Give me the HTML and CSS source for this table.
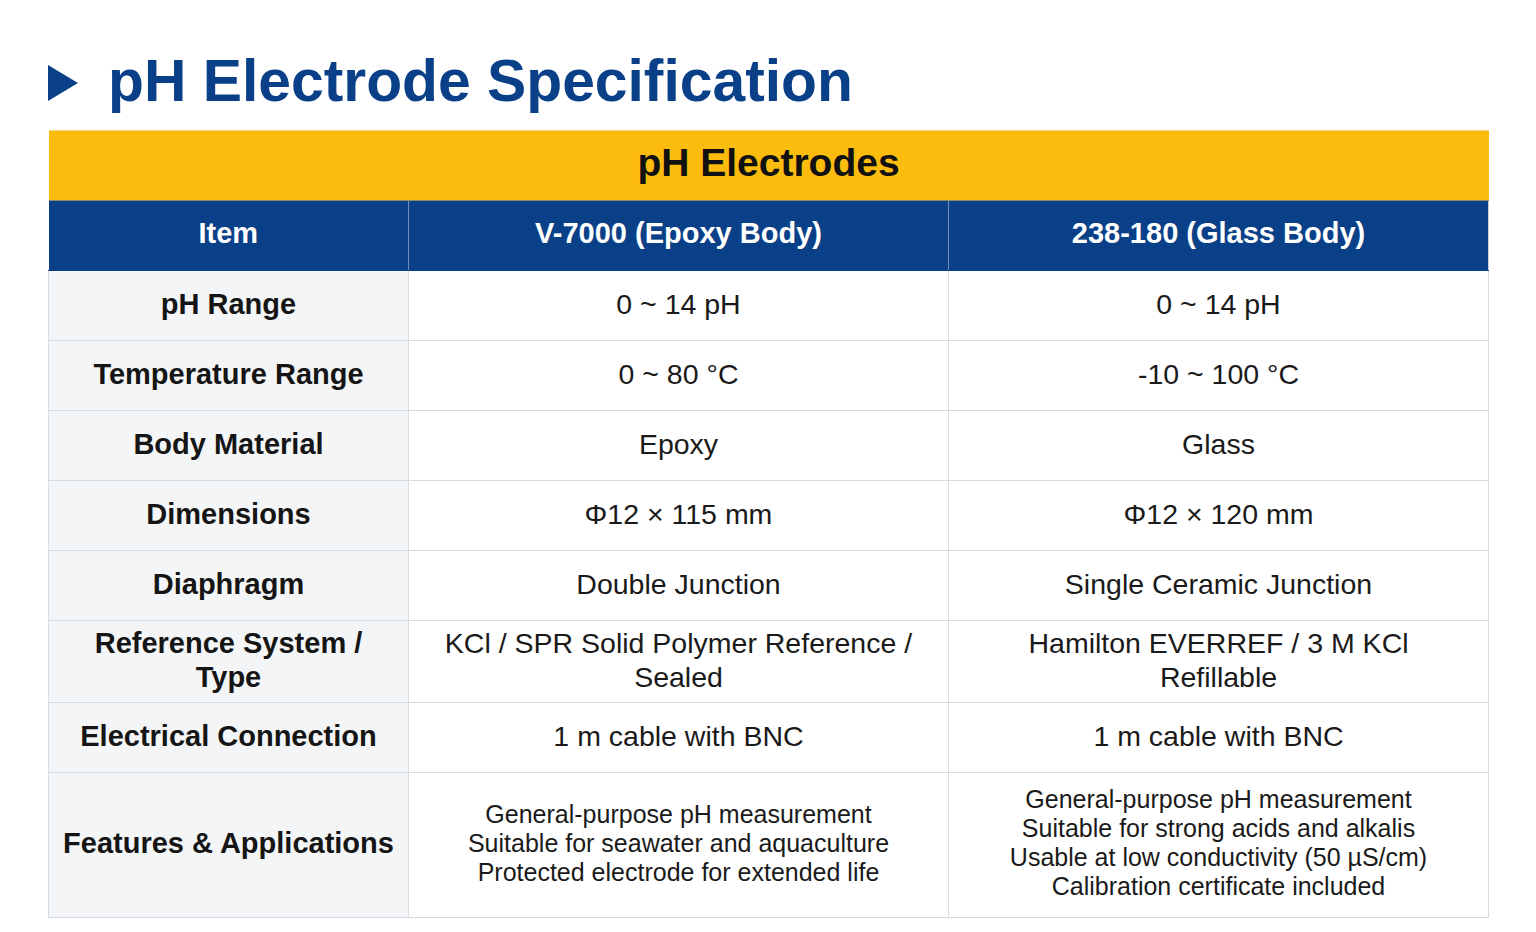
FILE: index.html
```html
<!DOCTYPE html>
<html lang="en">
<head>
<meta charset="utf-8">
<title>pH Electrode Specification</title>
<link rel="stylesheet" href="styles.css">
</head>
<body>
<main class="page">
  <h1 class="title">
    <svg class="marker" width="30" height="36" viewBox="0 0 30 36" aria-hidden="true"><polygon points="0,0 30,18 0,36" fill="#0a4088"/></svg>
    <span>pH Electrode Specification</span>
  </h1>
  <table class="spec">
    <colgroup>
      <col class="c-item">
      <col class="c-val">
      <col class="c-val">
    </colgroup>
    <thead>
      <tr class="band"><th colspan="3">pH Electrodes</th></tr>
      <tr class="head"><th>Item</th><th>V-7000 (Epoxy Body)</th><th>238-180 (Glass Body)</th></tr>
    </thead>
    <tbody>
      <tr class="row"><th>pH Range</th><td>0 ~ 14 pH</td><td>0 ~ 14 pH</td></tr>
      <tr class="row"><th>Temperature Range</th><td>0 ~ 80 °C</td><td>-10 ~ 100 °C</td></tr>
      <tr class="row"><th>Body Material</th><td>Epoxy</td><td>Glass</td></tr>
      <tr class="row"><th>Dimensions</th><td>Φ12 × 115 mm</td><td>Φ12 × 120 mm</td></tr>
      <tr class="row"><th>Diaphragm</th><td>Double Junction</td><td>Single Ceramic Junction</td></tr>
      <tr class="row tall"><th>Reference System /<br>Type</th><td>KCl / SPR Solid Polymer Reference /<br>Sealed</td><td>Hamilton EVERREF / 3 M KCl<br>Refillable</td></tr>
      <tr class="row"><th>Electrical Connection</th><td>1 m cable with BNC</td><td>1 m cable with BNC</td></tr>
      <tr class="row feat"><th>Features &amp; Applications</th><td class="small">General-purpose pH measurement<br>Suitable for seawater and aquaculture<br>Protected electrode for extended life</td><td class="small">General-purpose pH measurement<br>Suitable for strong acids and alkalis<br>Usable at low conductivity (50 µS/cm)<br>Calibration certificate included</td></tr>
    </tbody>
  </table>
</main>
</body>
</html>
```

FILE: styles.css
```css
* { box-sizing: border-box; }
html, body { margin: 0; padding: 0; background: #ffffff; }
body { font-family: "Liberation Sans", Arial, sans-serif; color: #151515; }

.page { padding: 45px 48px 0 48px; width: 1536px; }

.title {
  display: flex;
  align-items: center;
  gap: 30px;
  margin: 0 0 13px 0;
  height: 72px;
  font-size: 58.8px;
  font-weight: 700;
  color: #0a4088;
  line-height: 1;
}
.marker { flex: 0 0 auto; margin-top: 3px; }

.spec {
  width: 1440px;
  border-collapse: collapse;
  table-layout: fixed;
}
.c-item { width: 360px; }
.c-val { width: 540px; }

.spec th, .spec td {
  text-align: center;
  vertical-align: middle;
  padding: 0 10px 4px 10px;
  border: 1px solid #d6dce3;
}

.band th {
  height: 70px;
  background: #fbbc0e;
  color: #111111;
  font-size: 39px;
  font-weight: 700;
  border: none;
  border-top: 1px solid #f6d580;
  border-bottom: 1px solid #8a8a70;
  padding-bottom: 6px;
}
.head th {
  height: 70px;
  background: #0a4088;
  color: #ffffff;
  font-size: 29px;
  font-weight: 700;
  border-top: 1px solid #8a8a70;
  border-bottom: 1px solid #0a4088;
  border-left: none;
  border-right: 1px solid #6f8cbc;
}
.head th:last-child { border-right: 1px solid #c8d0dc; }

.row th {
  background: #f3f5f7;
  font-size: 29px;
  font-weight: 700;
  color: #151515;
  line-height: 34px;
}
.row td {
  font-size: 28.5px;
  font-weight: 400;
  line-height: 34px;
  color: #1a1a1a;
}
.row { height: 70px; }
.row.tall { height: 82px; }
.row.feat { height: 145px; }
.row td.small { font-size: 25px; line-height: 29px; }
```
